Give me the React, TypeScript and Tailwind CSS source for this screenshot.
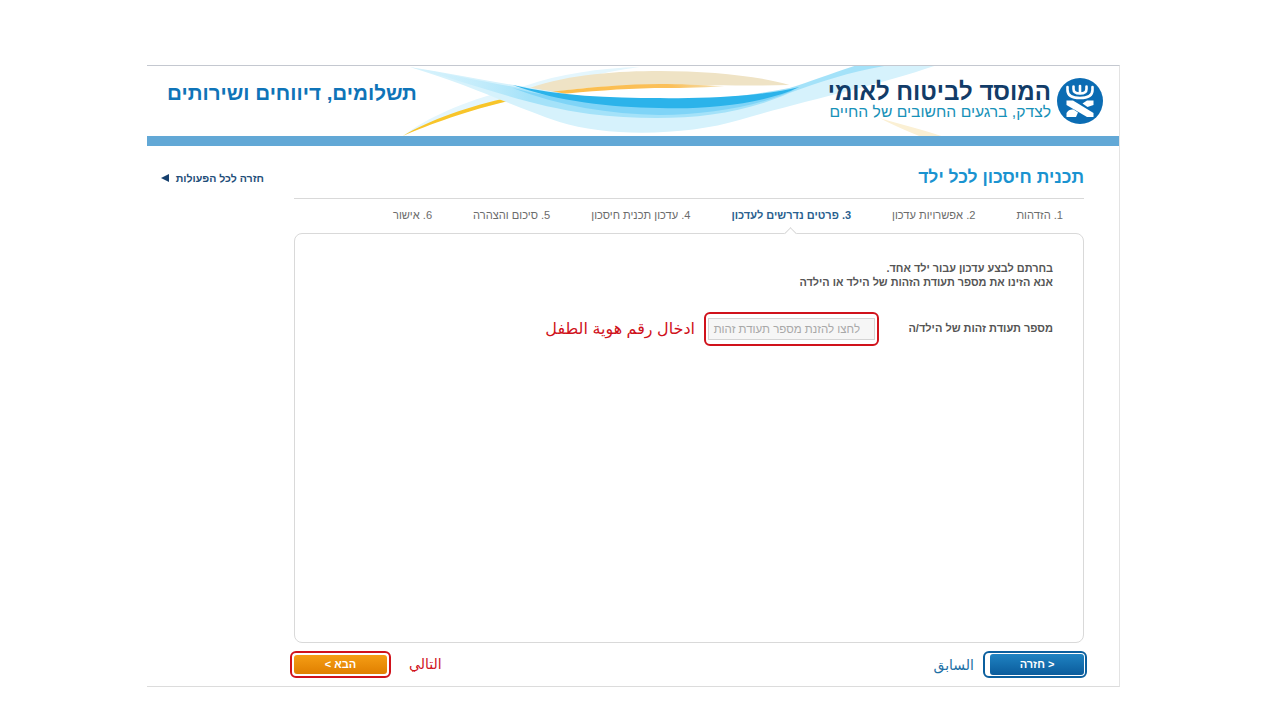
import React from 'react';

const sans = "font-['Liberation_Sans','DejaVu_Sans',sans-serif]";

const steps = [
  { label: '1. הזדהות' },
  { label: '2. אפשרויות עדכון' },
  { label: '3. פרטים נדרשים לעדכון', active: true },
  { label: '4. עדכון תכנית חיסכון' },
  { label: '5. סיכום והצהרה' },
  { label: '6. אישור' },
];

const Waves = () => (
  <svg className="absolute inset-0 w-full h-full" viewBox="147 66 973 70" preserveAspectRatio="none">
    <defs>
      <linearGradient id="fade" x1="0" x2="1" y1="0" y2="0">
        <stop offset="0" stopColor="#d8f3fd" stopOpacity="0.3" />
        <stop offset="0.25" stopColor="#a4e2f9" />
        <stop offset="1" stopColor="#a4e2f9" />
      </linearGradient>
      <linearGradient id="oran" x1="0" x2="1" y1="0" y2="0">
        <stop offset="0" stopColor="#fbbd4a" />
        <stop offset="0.7" stopColor="#fbc05a" />
        <stop offset="1" stopColor="#f3e3bd" />
      </linearGradient>
    </defs>
    <path d="M403 136 C430 116 470 98 525 86 C560 74 600 68 640 67 C600 72 560 84 513 100 C470 110 430 122 403 136 Z" fill="#e4f6fd" />
    <path d="M530 88 C570 74 620 71 660 71 C710 71 760 76 790 85 C750 86 700 85 660 85 C620 85 580 88 555 92 Z" fill="#efe3c5" />
    <path d="M403 136 C430 120 470 106 512 97 L512 100 C470 110 430 124 403 136 Z" fill="#f8c52a" />
    <path d="M550 92 C590 87 630 84 660 84 C680 84 700 85 725 86 C700 88 675 88 655 88 C620 89 590 91 555 95 Z" fill="url(#oran)" />
    <path d="M880 118 C900 124 925 130 942 136 L920 136 C905 130 892 124 880 118 Z" fill="#fbf0d4" />
    <path d="M410 67 C470 85 510 105 560 122 C610 138 690 135 740 120 C800 102 880 85 935 66 L860 66 C820 82 770 100 700 104 C620 108 520 85 410 67 Z" fill="#d6f2fc" />
    <path d="M410 67 C470 82 520 104 590 114 C660 122 730 120 790 93 C820 82 850 72 885 66 L855 66 C830 74 810 82 790 88 C730 100 650 105 590 98 C520 90 470 78 410 67 Z" fill="url(#fade)" />
    <path d="M513 88 C560 106 610 114 660 115 C710 115 760 106 795 90 C750 100 700 106 660 104 C610 104 560 100 513 88 Z" fill="#7fd4f7" />
    <path d="M513 85 C560 96 610 98 660 98 C700 99 760 97 800 87 C765 104 705 110 660 108 C610 107 560 102 513 85 Z" fill="#2bb3ea" />
  </svg>
);

const Logo = () => (
  <svg width="46" height="46" viewBox="0 0 46 46" className="shrink-0">
    <circle cx="23" cy="23" r="23" fill="#0b6cb3" />
    <g fill="none" stroke="#fff" strokeWidth="2.600" strokeLinecap="round" strokeLinejoin="round">
      <path d="M10.500 9 V12 C10.500 17 14 20 23 20 C32 20 35.500 17 35.500 12 V9" />
      <path d="M16.500 8.500 V11 C16.500 14.500 19 15.500 23 15.500 C27 15.500 29.500 14.500 29.500 11 V8.500" />
      <path d="M23 8 V15" />
    </g>
    <path d="M9.500 22.500 H16 L36.500 35 V39 H30 L9.500 27 Z" fill="#fff" />
    <path d="M36.500 22.500 V27 L30.500 29 L25.500 25.500 L30 22.500 Z" fill="#fff" />
    <path d="M9.500 39 V35 C11 32 14 31 16.500 31.500 L21 34.500 L19 39 Z" fill="#fff" />
  </svg>
);

const App = () => {
  return (
    <div dir="rtl" className={`w-full h-[720px] bg-white pt-[65px] pr-[160px] ${sans}`}>
      <div className="w-[973px] h-[622px] border-t border-t-[#c4c8d0] border-r border-r-[#e3e3e3] border-b border-b-[#dcdcdc] flex flex-col">
        <header className="relative h-[70px] shrink-0 flex items-center justify-between pr-[16px] pl-[20px] overflow-hidden">
          <Waves />
          <div className="relative flex items-center gap-[6px]">
            <Logo />
            <div className="flex flex-col mb-[3px]">
              <span className="text-[24px] leading-[24px] font-bold text-[#123c68]">המוסד לביטוח לאומי</span>
              <span className="text-[15.700px] leading-[15px] text-[#1791b8]">לצדק, ברגעים החשובים של החיים</span>
            </div>
          </div>
          <div className="relative text-[20.600px] font-bold text-[#0f74b8] mb-[15px]">תשלומים, דיווחים ושירותים</div>
        </header>
        <div className="h-[10px] shrink-0 bg-[#62a8d6]" />

        <div className="flex flex-1 min-h-0 pr-[35px] gap-[30px]">
          <main className="w-[790px] shrink-0 flex flex-col">
            <h1 className="pt-[20px] pb-[10px] text-[17.500px] leading-[22px] font-bold text-[#1a93d0] border-b border-[#d9d9d9]">
              תכנית חיסכון לכל ילד
            </h1>
            <nav className="h-[34px] shrink-0 flex items-center gap-[41px] pr-[21px] pb-[2px] text-[11.100px] text-[#6b6b6b]">
              {steps.map((s) => (
                <span key={s.label} className={s.active ? 'font-bold text-[#2a5f8f] text-[11px]' : ''}>
                  {s.label}
                </span>
              ))}
            </nav>
            <section className="relative h-[410px] shrink-0 rounded-lg border border-[#d9d9d9] bg-white pt-[27px] pr-[30px]">
              <span className="absolute -top-[5px] left-[491px] w-[9px] h-[9px] rotate-45 bg-white border-l border-t border-[#d9d9d9]" />
              <p className="text-[10.900px] leading-[14px] font-bold text-[#555]">
                בחרתם לבצע עדכון עבור ילד אחד.
                <br />
                אנא הזינו את מספר תעודת הזהות של הילד או הילדה
              </p>
              <div className="flex items-center mt-[23px]">
                <label className="w-[174px] shrink-0 pb-[2px] text-[11px] font-bold text-[#555]">מספר תעודת זהות של הילד/ה</label>
                <div className="w-[175px] h-[34px] shrink-0 rounded-md border-2 border-[#d0121b] flex items-center justify-center">
                  <input
                    readOnly
                    placeholder="לחצו להזנת מספר תעודת זהות"
                    className="w-[167px] h-[22px] border border-[#d4d4d4] bg-[#f6f6f6] pr-[14px] text-[11.500px] outline-none placeholder:text-[#a8a8a8]"
                  />
                </div>
                <span className="mr-[9px] text-[16px] text-[#d0121b]">ادخال رقم هوية الطفل</span>
              </div>
            </section>
            <div className="flex items-center justify-between -ml-[4px] -mr-[3px] mt-[8px]">
              <div className="flex items-center gap-[9px]">
                <div className="w-[104px] h-[27px] rounded-md border-2 border-[#0b5f9e] bg-white pl-[5px] py-px pr-px flex">
                  <button className="flex-1 rounded-[3px] bg-gradient-to-b from-[#1f83c2] to-[#0b5c9c] text-white text-[11px] font-bold">
                    &lt; חזרה
                  </button>
                </div>
                <span className="text-[14px] text-[#1d6fa5] mt-[2px]">السابق</span>
              </div>
              <div className="flex items-center gap-[18px]">
                <span className="text-[14px] text-[#d0121b]">التالي</span>
                <div className="w-[101px] h-[27px] rounded-md border-2 border-[#d0121b] bg-white p-[2px] flex">
                  <button className="flex-1 rounded-[3px] bg-gradient-to-b from-[#f59e14] to-[#e07f00] text-white text-[11px] font-bold">
                    הבא &gt;
                  </button>
                </div>
              </div>
            </div>
          </main>
          <aside className="pt-[25px] flex items-start">
            <a className="flex items-center gap-[7px] text-[10.600px] leading-[14px] font-bold text-[#1f4e79]">
              חזרה לכל הפעולות
              <span className="w-0 h-0 border-y-[4px] border-y-transparent border-r-[8px] border-r-[#16406e]" />
            </a>
          </aside>
        </div>
      </div>
    </div>
  );
};

export default App;
